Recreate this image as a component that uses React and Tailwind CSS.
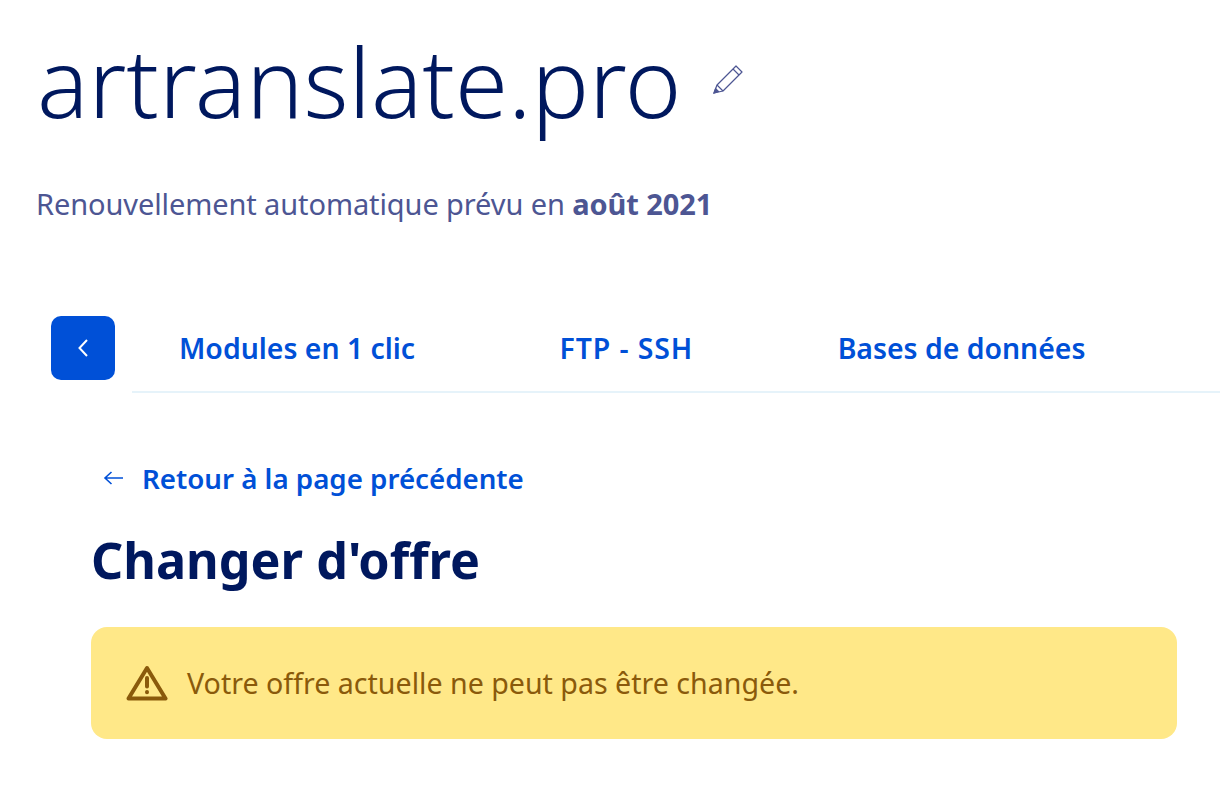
export default function App() {
  return (
    <div className="w-[1220px] h-[804px] overflow-hidden bg-white font-['Noto_Sans',sans-serif]">
      {/* Header */}
      <div className="pl-[37px] pt-[30px] flex items-center gap-[30px] h-[132px]">
        <h1 className="text-[96px] leading-[102px] font-light text-[#00185e]">artranslate.pro</h1>
        <svg width="34" height="34" viewBox="0 0 34 34" fill="none" stroke="#4d5693" strokeWidth="1.2" className="mt-[-4px]">
          <path d="M3 31 L6 23 L25 4 L31 10 L12 29 Z" strokeLinejoin="round" />
          <path d="M3 31 L4.6 26.5 L7.5 29.4 Z" fill="#4d5693" />
          <path d="M6 23 L12 29 M22 7 L28 13" />
        </svg>
      </div>
      <p className="pl-[36px] mt-[52px] text-[29px] leading-[40px] text-[#4d5693] tracking-[-0.1px]">
        Renouvellement automatique prévu en <b className="font-bold">août 2021</b>
      </p>

      {/* Tabs */}
      <div className="mt-[92px] pl-[51px] flex items-start">
        <button className="w-[64px] h-[64px] rounded-[10px] bg-[#0050d7] flex items-center justify-center shrink-0">
          <svg width="12" height="20" viewBox="0 0 12 20" fill="none" stroke="#fff" strokeWidth="2">
            <path d="M10 2 L2.5 10 L10 18" />
          </svg>
        </button>
        <div className="flex-1 ml-[17px] h-[77px] border-b-2 border-[#e6f3fa] flex items-center pb-[10px] pl-[47px] gap-[144.5px] text-[28.4px] font-semibold text-[#0050d7]">
          <span>Modules en 1 clic</span>
          <span className="tracking-[0.9px]">FTP - SSH</span>
          <span>Bases de données</span>
        </div>
      </div>

      {/* Content */}
      <div className="pl-[91px] pr-[43px]">
        <a className="mt-[63px] flex items-center gap-[18px] pl-[12px] text-[27.7px] leading-[44px] font-semibold text-[#0050d7]">
          <svg width="21" height="16" viewBox="0 0 21 16" fill="none" stroke="#0050d7" strokeWidth="1.6">
            <path d="M20 8 H2 M8.5 2 L2 8 L8.5 14" />
          </svg>
          Retour à la page précédente
        </a>
        <h2 className="mt-[26px] text-[50.3px] leading-[68px] font-bold text-[#00185e]">Changer d'offre</h2>
        <div className="mt-[33px] h-[112px] rounded-[16px] bg-[#ffe888] flex items-center pl-[35px] gap-[19px] text-[#8a5a0b]">
          <svg width="42" height="38" viewBox="0 0 42 38" fill="none" stroke="#8a5a0b" strokeWidth="4" strokeLinejoin="round" strokeLinecap="round">
            <path d="M21 4 L39.5 34.5 H2.5 Z" />
            <path d="M21 14 V22.5 M21 28 V28.2" />
          </svg>
          <span className="text-[28.6px]">Votre offre actuelle ne peut pas être changée.</span>
        </div>
      </div>
    </div>
  );
}
